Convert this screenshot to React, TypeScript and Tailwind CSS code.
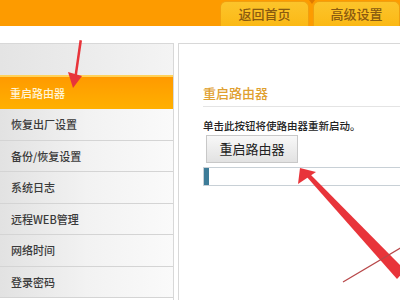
const font = { fontFamily: '"Noto Sans CJK SC", "Noto Sans", sans-serif' };

const menu = ['恢复出厂设置', '备份/恢复设置', '系统日志', '远程WEB管理', '网络时间', '登录密码'];

const Tab = ({ text, w }: { text: string; w: string }) => (
  <div
    className={`${w} h-[25px] rounded-t-[6px] border border-b-0 border-[#f0a010] bg-gradient-to-b from-[#fcc42a] to-[#fbb914] flex items-center justify-center text-[13px] font-medium text-[#8a5a10]`}
  >
    {text}
  </div>
);

const Arrows = () => (
  <svg className="absolute inset-0 pointer-events-none" width="400" height="300" viewBox="0 0 400 300">
    {/* arrow to the active menu item */}
    <polygon points="79.5,40 82,40.5 77,75 74.5,75" fill="#e8343a" />
    <polygon points="68,72 82,76 73,88" fill="#e8343a" />
    {/* arrow to the button */}
    <polygon points="306,176 309,173 405,270 397,279" fill="#e8343a" />
    <polygon points="300,168 316,172 298,184" fill="#e8343a" />
    {/* thin stroke */}
    <line x1="343" y1="282" x2="402" y2="247" stroke="#b8484a" strokeWidth="1.3" />
  </svg>
);

export default function App() {
  return (
    <div className="relative w-[400px] h-[300px] overflow-hidden bg-white" style={font}>
      <div className="h-[26px] bg-[#fd9b00] flex items-end justify-end gap-[4px]">
        <Tab text="返回首页" w="w-[89px]" />
        <Tab text="高级设置" w="w-[87px]" />
      </div>

      <div className="mt-[17px] flex gap-[4px]">
        <div className="w-[174px] border-t border-r border-[#d8d8d8]">
          <div className="h-[31px] bg-gradient-to-r from-[#e4e4e4] to-[#f4f4f4]" />
          <div className="h-[34px] border-t-2 border-[#ffd25a] bg-gradient-to-b from-[#ff9a00] to-[#ffb000] flex items-center pl-[10px] text-[11px] font-medium text-[#fff4d8]">
            重启路由器
          </div>
          {menu.map((m) => (
            <div
              key={m}
              className="h-[31.5px] border-b border-[#d4d4d4] bg-gradient-to-r from-[#e2e2e2] via-[#f2f2f2] to-[#fafafa] flex items-center pl-[11px] text-[11px] font-medium text-[#3a3a3a]"
            >
              {m}
            </div>
          ))}
        </div>

        <div className="flex-1 h-[260px] border-t border-l border-[#d8d8d8] pl-[24px] pt-[41px]">
          <div className="h-[22px] border-b border-[#e4e4e4] text-[13px] leading-[16px] font-medium text-[#e0a030]">重启路由器</div>
          <div className="mt-[12px] text-[10.5px] leading-[14px] font-medium text-[#222]">单击此按钮将使路由器重新启动。</div>
          <button className="ml-[3px] mt-[2px] w-[92px] h-[28px] border border-[#c8c8c8] bg-gradient-to-b from-[#f8f8f8] to-[#e2e2e2] text-[13px] text-[#222]">
            重启路由器
          </button>
          <div className="mt-[4px] h-[19px] border border-[#c8d0d6] border-r-0 flex">
            <div className="w-[5px] bg-[#3d7c98]" />
          </div>
        </div>
      </div>

      <div className="absolute top-0 left-[309px] w-0 h-0 border-l-[3px] border-r-[3px] border-t-[4px] border-l-transparent border-r-transparent border-t-[#e07a00]" />
      <Arrows />
    </div>
  );
}
